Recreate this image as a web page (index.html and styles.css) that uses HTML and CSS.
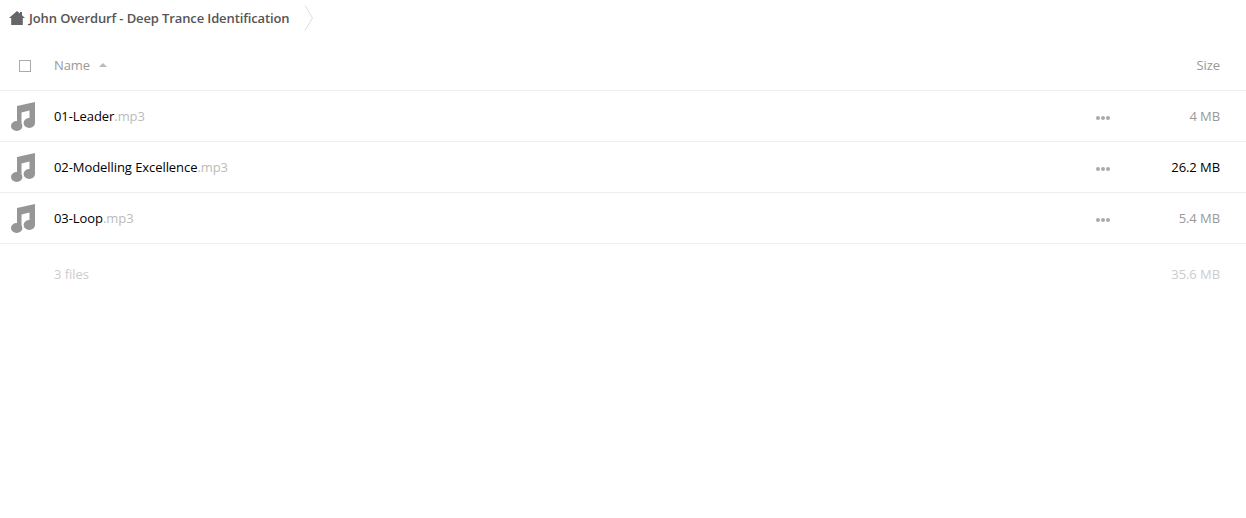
FILE: index.html
```html
<!DOCTYPE html>
<html lang="en">
<head>
  <meta charset="UTF-8">
  <title>Files</title>
  <link rel="stylesheet" href="styles.css">
</head>
<body>
  <div class="crumbs">
    <svg class="home" width="16" height="14" viewBox="0 0 16 14"><path d="M8 0 L11 2.5 V1 H13 V4.2 L16 7 H13.8 V14 H2.2 V7 H0 Z" fill="#666"/></svg>
    <span class="crumb-name">John Overdurf - Deep Trance Identification</span>
    <svg class="chevron" width="10" height="26" viewBox="0 0 10 26"><path d="M1 0.5 L8.5 13 L1 25.5" fill="none" stroke="#ddd" stroke-width="1"/></svg>
  </div>

  <div class="row head">
    <div class="col-icon"><span class="checkbox"></span></div>
    <div class="col-name">Name <span class="sort"></span></div>
    <div class="col-size">Size</div>
  </div>

  <div class="row file">
    <div class="col-icon"><svg class="note" viewBox="0 0 24 29"><path d="M6 4 L24 0 V21 H18.5 V8.5 L10.5 10.5 V24 H6 Z M0 24 a5.7 5 0 1 1 11.4 0 a5.7 5 0 1 1 -11.4 0 Z M12.6 21 a5.7 5 0 1 1 11.4 0 a5.7 5 0 1 1 -11.4 0 Z" fill="#969696"/></svg></div>
    <div class="col-name">01-Leader<span class="ext">.mp3</span></div>
    <div class="col-more"><span></span><span></span><span></span></div>
    <div class="col-size mid">4 MB</div>
  </div>
  <div class="row file">
    <div class="col-icon"><svg class="note" viewBox="0 0 24 29"><path d="M6 4 L24 0 V21 H18.5 V8.5 L10.5 10.5 V24 H6 Z M0 24 a5.7 5 0 1 1 11.4 0 a5.7 5 0 1 1 -11.4 0 Z M12.6 21 a5.7 5 0 1 1 11.4 0 a5.7 5 0 1 1 -11.4 0 Z" fill="#969696"/></svg></div>
    <div class="col-name">02-Modelling Excellence<span class="ext">.mp3</span></div>
    <div class="col-more"><span></span><span></span><span></span></div>
    <div class="col-size">26.2 MB</div>
  </div>
  <div class="row file">
    <div class="col-icon"><svg class="note" viewBox="0 0 24 29"><path d="M6 4 L24 0 V21 H18.5 V8.5 L10.5 10.5 V24 H6 Z M0 24 a5.7 5 0 1 1 11.4 0 a5.7 5 0 1 1 -11.4 0 Z M12.6 21 a5.7 5 0 1 1 11.4 0 a5.7 5 0 1 1 -11.4 0 Z" fill="#969696"/></svg></div>
    <div class="col-name">03-Loop<span class="ext">.mp3</span></div>
    <div class="col-more"><span></span><span></span><span></span></div>
    <div class="col-size mid">5.4 MB</div>
  </div>

  <div class="summary">
    <div class="col-icon"></div>
    <div class="col-name">3 files</div>
    <div class="col-size">35.6 MB</div>
  </div>
</body>
</html>
```

FILE: styles.css
```css
body {
  margin: 0;
  background: #fff;
  color: #000;
  font-family: "Open Sans", sans-serif;
  font-size: 13px;
  letter-spacing: -0.07px;
}

.crumbs {
  display: flex;
  align-items: center;
  height: 36px;
  padding-left: 9px;
}

.home {
  margin-right: 4px;
}

.crumb-name {
  font-weight: 600;
  color: #555;
  letter-spacing: -0.12px;
}

.chevron {
  margin-left: 15px;
}

.row {
  display: flex;
  align-items: center;
  height: 50px;
  border-bottom: 1px solid #eee;
}

.head {
  height: 50px;
  padding-top: 4px;
  color: #999;
}

.col-icon {
  display: flex;
  justify-content: center;
  align-items: center;
  width: 46px;
  margin-right: 8px;
  flex: none;
}

.col-name {
  flex: 1;
  display: flex;
  align-items: center;
}

.checkbox {
  width: 10px;
  height: 10px;
  border: 1px solid #aaa;
  margin-left: 4px;
  margin-top: 2px;
}

.sort {
  width: 0;
  height: 0;
  margin-left: 9px;
  border-left: 4px solid transparent;
  border-right: 4px solid transparent;
  border-bottom: 4px solid #bbb;
}

.note {
  width: 24px;
  height: 29px;
  margin-left: -1px;
}

.ext {
  color: #bbb;
}

.col-more {
  display: flex;
  gap: 1px;
  margin-top: 3px;
  margin-right: 84px;
}

.col-more span {
  width: 4px;
  height: 4px;
  border-radius: 50%;
  background: #aaa;
}

.col-size {
  width: 26px;
  margin-right: 26px;
  display: flex;
  justify-content: flex-end;
  white-space: nowrap;
}

.head .col-size,
.mid {
  color: #999;
}

.summary {
  display: flex;
  align-items: center;
  height: 60px;
  color: #ccc;
}
```
